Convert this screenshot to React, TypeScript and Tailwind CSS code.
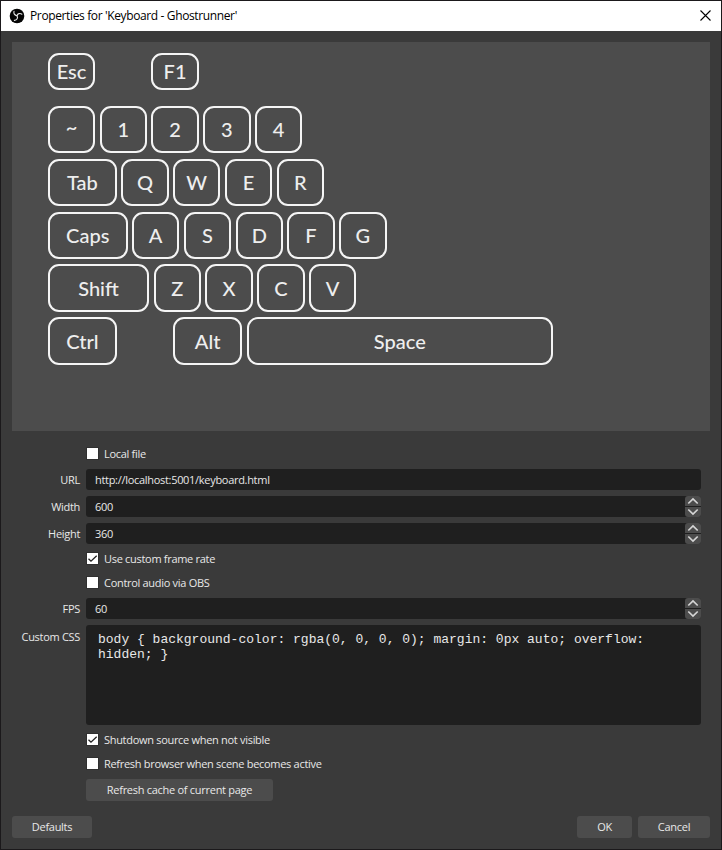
import React from 'react';

function Key({ label, className = 'w-[47.4px]', labelClass = '' }: { label: string; className?: string; labelClass?: string }) {
  return (
    <div className={`box-border flex h-full shrink-0 items-center justify-center rounded-[11px] border-2 border-[#f5f5f5] font-['Lato',sans-serif] text-[20px] font-medium leading-none text-[#eeeeee] ${className}`}>
      <span className={labelClass}>{label}</span>
    </div>
  );
}

function Row({ children, className = 'h-[47.4px]' }: { children: React.ReactNode; className?: string }) {
  return <div className={`flex gap-[4.4px] ${className}`}>{children}</div>;
}

function Check({ label, checked }: { label: string; checked?: boolean }) {
  return (
    <div className="flex h-[14px] items-start">
      <span className="flex h-[13px] w-[13px] items-center justify-center border border-[#303030] bg-white">
        {checked && (
          <svg width="11" height="11" viewBox="0 0 11 11" fill="none" stroke="#222" strokeWidth="1.3">
            <path d="M1.5 5.7 4 8.2 9.7 2.7" />
          </svg>
        )}
      </span>
      <span className="ml-[5px] whitespace-nowrap">{label}</span>
    </div>
  );
}

function Chevron({ down }: { down?: boolean }) {
  return (
    <span className={`flex h-[10px] w-4 items-center justify-center bg-[#4c4c4c] ${down ? 'rounded-b-[3px]' : 'rounded-t-[3px]'}`}>
      <svg width="12" height="8" viewBox="0 0 12 8" fill="none" stroke="#d5d5d5" strokeWidth="1.7">
        <path d={down ? 'M1.3 1.5 6 6 10.7 1.5' : 'M1.3 6.5 6 2 10.7 6.5'} />
      </svg>
    </span>
  );
}

function Field({ label, value, spin }: { label: string; value: string; spin?: boolean }) {
  return (
    <div className="flex h-[21px] items-center">
      <span className="w-[79px] whitespace-nowrap text-right">{label}</span>
      <div className="ml-[6px] flex h-[21px] w-[615px] items-center justify-between rounded-[3px] bg-[#1f1f1f] pl-[9px]">
        <span>{value}</span>
        {spin && (
          <div className="flex flex-col gap-px">
            <Chevron />
            <Chevron down />
          </div>
        )}
      </div>
    </div>
  );
}

function Button({ label, className }: { label: string; className: string }) {
  return <button className={`flex h-[22px] items-center justify-center whitespace-nowrap rounded-[3px] bg-[#4c4c4c] tracking-[-0.28px] ${className}`}>{label}</button>;
}

export default function App() {
  return (
    <div className="flex h-[850px] w-[722px] flex-col overflow-hidden border border-[#1b191b] bg-[#3a3a3a] font-['Open_Sans',sans-serif] text-[11px] leading-[14px] tracking-[-0.3px] text-[#e8e8e8]">
      <header className="flex h-[30px] shrink-0 items-center bg-white pl-[8px] pr-[9px] text-black">
        <svg className="-mt-px" width="16" height="16" viewBox="0 0 16 16" fill="none">
          <circle cx="8" cy="8" r="7.3" fill="#050505" />
          <g stroke="#e8e8e8" strokeWidth="1.1" strokeLinecap="round">
            <path d="M8 7.7C5.5 7.2 4.4 5.4 5 3.4" />
            <path d="M8 7.7C8.7 5.5 11 4.9 12.9 6.2" />
            <path d="M8 7.7C9.3 9.8 8 12.2 5.4 12.4" />
          </g>
        </svg>
        <h1 className="ml-[5px] whitespace-nowrap text-[12px] tracking-[-0.37px]">Properties for &#39;Keyboard - Ghostrunner&#39;</h1>
        <svg className="-mt-px ml-auto mr-px" width="11" height="11" viewBox="0 0 11 11" stroke="#000" strokeWidth="1.1">
          <path d="M.5.5 10.5 10.5M10.5.5.5 10.5" />
        </svg>
      </header>

      <section className="ml-[11px] mt-[11px] flex h-[389px] w-[698px] shrink-0 flex-col bg-[#4c4c4c] pl-[35.8px] pt-[10.6px] tracking-normal">
        <Row className="mb-[16.2px] h-[37px]">
          <Key label="Esc" />
          <Key label="F1" className="ml-[51.8px] w-[47.4px]" />
        </Row>
        <div className="flex flex-col gap-[5.5px]">
          <Row><Key label="~" labelClass="-mt-[7px]" /><Key label="1" /><Key label="2" /><Key label="3" /><Key label="4" /></Row>
          <Row><Key label="Tab" className="w-[69.1px]" /><Key label="Q" /><Key label="W" /><Key label="E" /><Key label="R" /></Row>
          <Row><Key label="Caps" className="w-[79.8px]" /><Key label="A" /><Key label="S" /><Key label="D" /><Key label="F" /><Key label="G" /></Row>
          <Row><Key label="Shift" className="w-[101.4px]" /><Key label="Z" /><Key label="X" /><Key label="C" /><Key label="V" /></Row>
          <Row><Key label="Ctrl" className="w-[69.1px]" /><Key label="Alt" className="ml-[51.8px] w-[69.1px]" /><Key label="Space" className="w-[306.5px]" /></Row>
        </div>
      </section>

      <main className="flex flex-col">
        <div className="ml-[85px] mt-[16px]"><Check label="Local file" /></div>
        <div className="mt-[8px] flex flex-col gap-[6px]">
          <Field label="URL" value="http://localhost:5001/keyboard.html" />
          <Field label="Width" value="600" spin />
          <Field label="Height" value="360" spin />
        </div>
        <div className="ml-[85px] mt-[8px] flex flex-col gap-[10px]">
          <Check label="Use custom frame rate" checked />
          <Check label="Control audio via OBS" />
        </div>
        <div className="mt-[8px]"><Field label="FPS" value="60" spin /></div>
        <div className="mt-[6px] flex">
          <span className="w-[79px] whitespace-nowrap pt-[5px] text-right">Custom CSS</span>
          <div className="ml-[6px] h-[100px] w-[615px] whitespace-pre rounded-[3px] bg-[#1f1f1f] pl-[12px] pt-[7px] font-['Liberation_Mono',monospace] text-[13px] leading-[15px] tracking-normal">
            {'body { background-color: rgba(0, 0, 0, 0); margin: 0px auto; overflow:\nhidden; }'}
          </div>
        </div>
        <div className="ml-[85px] mt-[8px] flex flex-col gap-[10px]">
          <Check label="Shutdown source when not visible" checked />
          <Check label="Refresh browser when scene becomes active" />
        </div>
        <Button label="Refresh cache of current page" className="ml-[85px] mt-[8px] w-[187px]" />
      </main>
      <footer className="ml-[11px] mt-[15px] flex w-[698px] gap-[6px]">
        <Button label="Defaults" className="mr-auto w-[80px]" />
        <Button label="OK" className="w-[55px]" />
        <Button label="Cancel" className="w-[72px]" />
      </footer>
    </div>
  );
}
